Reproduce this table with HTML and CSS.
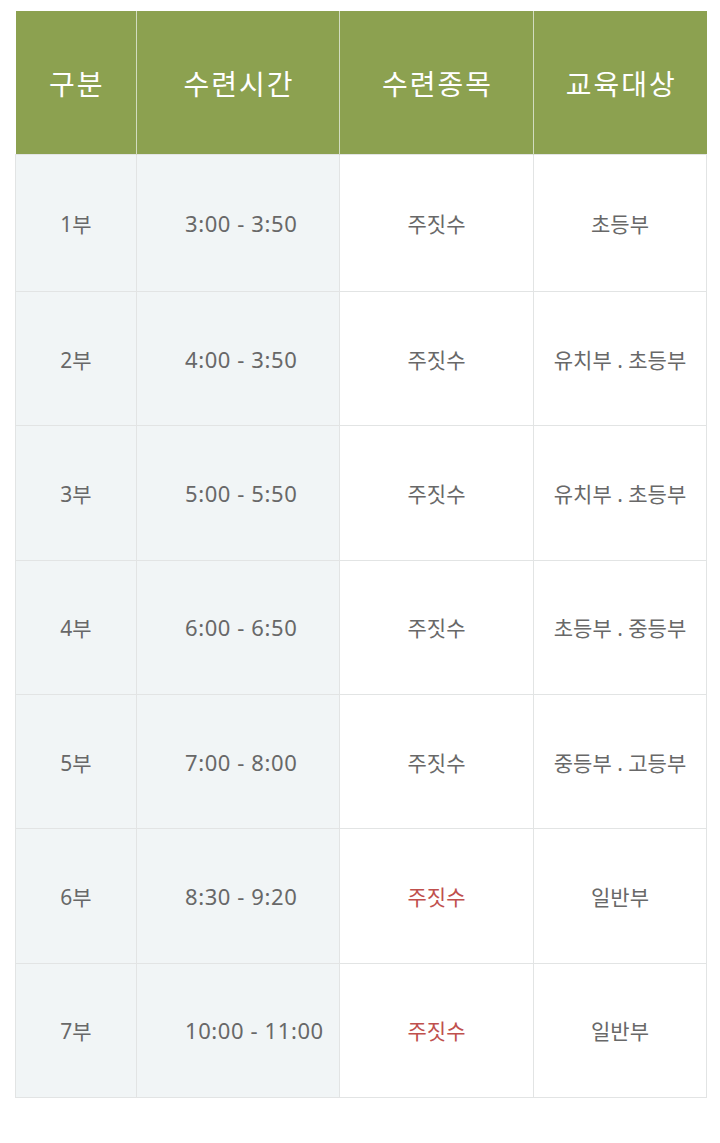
FILE: index.html
```html
<!DOCTYPE html>
<html lang="ko">
<head>
<meta charset="utf-8">
<link rel="stylesheet" href="styles.css">
</head>
<body>
<div class="wrap">
<table class="sched">
  <colgroup>
    <col class="c1"><col class="c2"><col class="c3"><col class="c4">
  </colgroup>
  <thead>
    <tr><th>구분</th><th>수련시간</th><th>수련종목</th><th>교육대상</th></tr>
  </thead>
  <tbody>
    <tr class="first"><td class="shade">1부</td><td class="shade time">3:00 - 3:50</td><td>주짓수</td><td>초등부</td></tr>
    <tr><td class="shade">2부</td><td class="shade time">4:00 - 3:50</td><td>주짓수</td><td>유치부 . 초등부</td></tr>
    <tr><td class="shade">3부</td><td class="shade time">5:00 - 5:50</td><td>주짓수</td><td>유치부 . 초등부</td></tr>
    <tr><td class="shade">4부</td><td class="shade time">6:00 - 6:50</td><td>주짓수</td><td>초등부 . 중등부</td></tr>
    <tr><td class="shade">5부</td><td class="shade time">7:00 - 8:00</td><td>주짓수</td><td>중등부 . 고등부</td></tr>
    <tr><td class="shade">6부</td><td class="shade time">8:30 - 9:20</td><td class="red">주짓수</td><td>일반부</td></tr>
    <tr><td class="shade">7부</td><td class="shade time">10:00 - 11:00</td><td class="red">주짓수</td><td>일반부</td></tr>
  </tbody>
</table>
</div>
</body>
</html>
```
FILE: styles.css
```css
html, body {
  margin: 0;
  padding: 0;
  background: #ffffff;
}
.wrap {
  padding: 11px 14px 0 15px;
}
.sched {
  width: 691px;
  border-collapse: collapse;
  table-layout: fixed;
  font-family: "Noto Sans", "Noto Sans CJK KR", sans-serif;
}
.c1 { width: 121px; }
.c2 { width: 203px; }
.c3 { width: 194px; }
.c4 { width: 173px; }
.sched th {
  height: 143px;
  padding: 0 0 0 2px;
  background: #8ca150;
  color: #ffffff;
  font-size: 28px;
  font-weight: 400;
  letter-spacing: 2px;
  text-align: center;
  border-left: 1px solid #d2dcc0;
  border-right: 1px solid #d2dcc0;
}
.sched th:first-child { border-left: none; }
.sched th:last-child { border-right: none; }
.sched td {
  height: 133.3px;
  padding: 0;
  border: 1px solid #e2e4e4;
  color: #686868;
  font-size: 21px;
  text-align: center;
  background: #ffffff;
}
.sched tr.first td { height: 136.2px; }
.sched td.shade { background: #f1f5f6; }
.sched td.time {
  text-align: left;
  padding-left: 48px;
  font-size: 22px;
  letter-spacing: 0.6px;
}
.sched td.red { color: #c0504d; }
```
